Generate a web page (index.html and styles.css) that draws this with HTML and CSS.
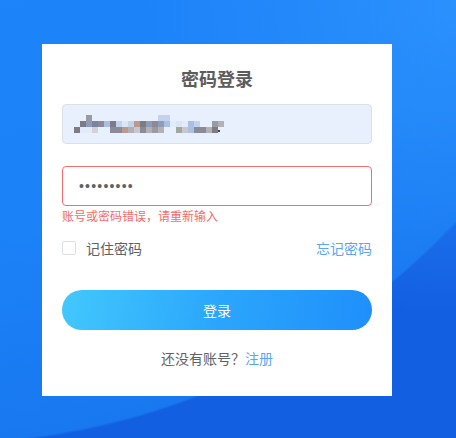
FILE: index.html
```html
<!DOCTYPE html>
<html>
<head>
	<meta charset="utf-8">
	<title>密码登录</title>
	<link rel="stylesheet" href="styles.css">
</head>
<body>
	<section class="card">
		<h1 class="title">密码登录</h1>

		<div class="field autofill">
			<div class="mosaic" aria-hidden="true">
				<span class="row">
					<i class="sp w2"></i><i class="g1"></i><i class="sp w11"></i><i class="c2"></i><i class="c2"></i>
				</span>
				<span class="row">
					<i class="sp w1"></i><i class="g2"></i><i class="b1"></i><i class="b2"></i><i class="g3"></i><i class="c1"></i><i class="g2"></i><i class="c2"></i><i class="c3"></i><i class="c2"></i><i class="br"></i><i class="g2"></i><i class="b1"></i><i class="g3"></i><i class="b1"></i><i class="c1"></i><i class="p1"></i><i class="c3"></i><i class="p1"></i><i class="c1"></i><i class="c2"></i><i class="sp w2"></i><i class="g1"></i><i class="g4"></i>
				</span>
				<span class="row">
					<i class="g2"></i><i class="p1"></i><i class="p1"></i><i class="p2"></i><i class="sp w2"></i><i class="g3"></i><i class="g3"></i><i class="br"></i><i class="g4"></i><i class="g5"></i><i class="g3"></i><i class="g4"></i><i class="g1"></i><i class="g4"></i><i class="sp w2"></i><i class="gr"></i><i class="g5"></i><i class="c1"></i><i class="g3"></i><i class="g3"></i><i class="g4"></i><i class="g2"></i><i class="dot"></i>
				</span>
			</div>
		</div>

		<input class="field error" type="password" value="123456789">
		<p class="msg">账号或密码错误，请重新输入</p>

		<div class="opts">
			<label class="remember"><span class="box"></span>记住密码</label>
			<a class="link" href="#">忘记密码</a>
		</div>

		<button class="btn">登录</button>

		<p class="foot">还没有账号？<a class="link" href="#">注册</a></p>
	</section>
</body>
</html>
```

FILE: styles.css
```css
html, body{margin: 0; height: 100%; overflow: hidden;}

body{
	font-family: "Noto Sans CJK SC", "Noto Sans", sans-serif;
	background-color: #135fe2;
	background-image:
		radial-gradient(circle at 100% 0, #2b91fd 0, rgba(43,145,253,0) 50%),
		radial-gradient(circle 706px at -57px -261px, #1d85fb 0, #1c82f8 70%, #1878f0 99.6%, rgba(19,95,226,0) 100%);
	display: flex;
	align-items: center;
}

.card{
	margin: 2px 0 0 42px;
	width: 310px;
	padding: 22px 20px 28px;
	background: #fff;
}

.title{
	margin: 0 0 14px;
	font-size: 18px;
	line-height: 24px;
	font-weight: 700;
	color: #5c5c5c;
	text-align: center;
}

.field{
	display: block;
	box-sizing: border-box;
	width: 310px;
	height: 40px;
	margin: 0;
	padding: 0 15px;
	border: 1px solid #dcdfe6;
	border-radius: 4px;
	font-family: "Liberation Sans", sans-serif;
	font-size: 14px;
	color: #606266;
	outline: none;
}
.autofill{
	background: #e8f0fe;
	display: flex;
	align-items: center;
	padding-left: 11px;
	margin-bottom: 22px;
}
.error{
	border-color: #f56c6c;
	letter-spacing: 1.2px;
	padding-left: 16px;
}

.mosaic{display: flex; flex-direction: column;}
.mosaic .row{display: flex; height: 6px;}
.mosaic i{display: block; width: 6px; height: 6px;}
.mosaic i.sp.w1{width: 6px;}
.mosaic i.sp.w2{width: 12px;}
.mosaic i.sp.w11{width: 66px;}
.mosaic .g1{background: #9a9aa2;}
.mosaic .g2{background: #7d7b84;}
.mosaic .g3{background: #8a8a98;}
.mosaic .g4{background: #b3b1b6;}
.mosaic .g5{background: #c9c7cc;}
.mosaic .b1{background: #8f9cb8;}
.mosaic .b2{background: #7c84a0;}
.mosaic .c1{background: #a8c0e4;}
.mosaic .c2{background: #c3d3ec;}
.mosaic .c3{background: #d8e6f6;}
.mosaic .p1{background: #e2ecf8;}
.mosaic .p2{background: #d2d2d4;}
.mosaic .br{background: #b99a8c;}
.mosaic .gr{background: #a2a89f;}
.mosaic .dot{width: 2px; height: 2px; margin-top: 3px; background: #444;}

.msg{
	margin: 2px 0 0;
	font-size: 12px;
	line-height: 16px;
	color: #f56c6c;
}

.opts{
	margin-top: 14px;
	height: 20px;
	display: flex;
	align-items: center;
	justify-content: space-between;
	font-size: 14px;
}
.remember{
	display: flex;
	align-items: center;
	color: #606266;
}
.box{
	box-sizing: border-box;
	width: 14px; height: 14px;
	border: 1px solid #dcdfe6;
	border-radius: 2px;
	margin-right: 10px;
}

.link{
	color: #5aa6f3;
	text-decoration: none;
}

.btn{
	display: block;
	width: 310px;
	height: 40px;
	margin-top: 32px;
	border: 0;
	border-radius: 20px;
	background: linear-gradient(100deg, #42c8fd 0%, #2ba6fc 50%, #1f8ffb 100%);
	color: #fff;
	font-family: "Noto Sans CJK SC", sans-serif;
	font-size: 14px;
}

.foot{
	margin: 18px 0 0;
	font-size: 14px;
	line-height: 20px;
	color: #606266;
	text-align: center;
}
```
